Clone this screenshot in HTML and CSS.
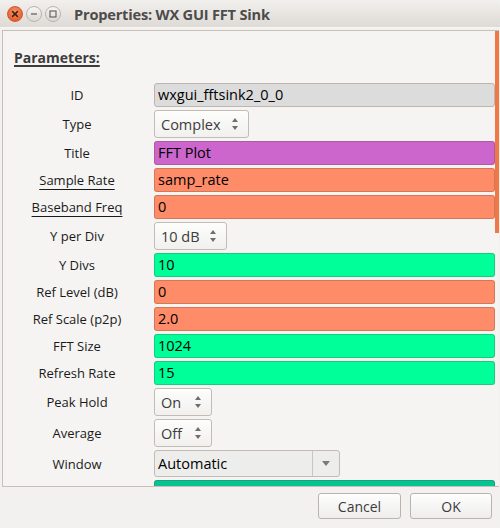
FILE: index.html
```html
<!DOCTYPE html>
<html>
<head>
<meta charset="utf-8">
<link rel="stylesheet" href="styles.css">
</head>
<body>
<div class="window">
  <div class="titlebar">
    <span class="wbtn close"><svg width="16" height="16" viewBox="0 0 16 16"><path d="M5.6 5.6 L10.4 10.4 M10.4 5.6 L5.6 10.4" stroke="#3b2418" stroke-width="1.5" stroke-linecap="round"/></svg></span>
    <span class="wbtn"><svg width="16" height="16" viewBox="0 0 16 16"><path d="M5 8 H11" stroke="#5b5b5b" stroke-width="1.2"/></svg></span>
    <span class="wbtn"><svg width="16" height="16" viewBox="0 0 16 16"><rect x="5" y="5" width="6" height="6" fill="none" stroke="#5b5b5b" stroke-width="1.1"/></svg></span>
    <span class="title">Properties: WX GUI FFT Sink</span>
  </div>
  <div class="body">
    <div class="panel">
      <div class="heading">Parameters:</div>
      <div class="params">
        <div class="label">ID</div>
        <div class="entry id">wxgui_fftsink2_0_0</div>

        <div class="label">Type</div>
        <div class="combo w95"><span>Complex</span><span class="spin"></span></div>

        <div class="label">Title</div>
        <div class="entry string">FFT Plot</div>

        <div class="label"><span class="ul">Sample Rate</span></div>
        <div class="entry real">samp_rate</div>

        <div class="label"><span class="ul">Baseband Freq</span></div>
        <div class="entry real">0</div>

        <div class="label">Y per Div</div>
        <div class="combo w73"><span>10 dB</span><span class="spin"></span></div>

        <div class="label">Y Divs</div>
        <div class="entry int">10</div>

        <div class="label">Ref Level (dB)</div>
        <div class="entry real">0</div>

        <div class="label">Ref Scale (p2p)</div>
        <div class="entry real">2.0</div>

        <div class="label">FFT Size</div>
        <div class="entry int">1024</div>

        <div class="label">Refresh Rate</div>
        <div class="entry int">15</div>

        <div class="label">Peak Hold</div>
        <div class="combo w58"><span>On</span><span class="spin"></span></div>

        <div class="label">Average</div>
        <div class="combo w58"><span>Off</span><span class="spin"></span></div>

        <div class="label">Window</div>
        <div class="dropdown"><span class="dd-text">Automatic</span><span class="dd-btn"><span class="tri"></span></span></div>

        <div class="label"></div>
        <div class="entry int2"></div>
      </div>
      <div class="scrollthumb"></div>
    </div>
    <div class="buttons">
      <button class="btn">Cancel</button>
      <button class="btn">OK</button>
    </div>
  </div>
</div>
</body>
</html>
```

FILE: styles.css
```css
html, body {
  margin: 0;
  padding: 0;
  background: #f2f1f0;
  font-family: "Open Sans", "DejaVu Sans", sans-serif;
}

.window {
  width: 500px;
  height: 528px;
  background: #f2f1f0;
  overflow: hidden;
}

.titlebar {
  height: 28px;
  box-sizing: border-box;
  display: flex;
  align-items: center;
  padding-left: 7px;
  background: linear-gradient(#f2f0ed, #dedad5);
  border-radius: 5px 5px 0 0;
  border-bottom: 1px solid #f7f6f4;
}

.wbtn {
  width: 16px;
  height: 16px;
  box-sizing: border-box;
  border-radius: 50%;
  border: 1px solid #b9b3ac;
  background: linear-gradient(#f7f6f4, #dcd8d3);
  margin-right: 3px;
  display: flex;
  align-items: center;
  justify-content: center;
}

.wbtn svg {
  flex: none;
}

.wbtn.close {
  border-color: #c95a33;
  background: radial-gradient(circle at 50% 35%, #f9936a, #e8602f 70%);
}

.title {
  margin-left: 10px;
  font-weight: bold;
  font-size: 14.6px;
  color: #4c4c4c;
  letter-spacing: -0.2px;
}

.body {
  padding-top: 2px;
}

.panel {
  position: relative;
  margin-left: 2px;
  width: 497px;
  height: 457px;
  box-sizing: border-box;
  border: 1px solid #c8c0b7;
  border-right: none;
  background: #f5f4f2;
  overflow: hidden;
}

.heading {
  margin: 18px 0 0 11px;
  font-weight: bold;
  font-size: 14px;
  line-height: 17px;
  color: #3c3c3c;
  text-decoration: underline;
  text-decoration-thickness: 2px;
  text-underline-offset: 2px;
}

.params {
  margin-top: 17px;
  display: grid;
  grid-template-columns: 148px 341px;
  column-gap: 3px;
  row-gap: 3px;
}

.label {
  align-self: center;
  text-align: center;
  font-size: 13px;
  color: #1a1a1a;
}

.ul {
  text-decoration: underline;
  text-underline-offset: 4px;
}

.entry {
  height: 24px;
  box-sizing: border-box;
  border: 1px solid rgba(90, 70, 50, 0.28);
  border-radius: 3px;
  padding-left: 3px;
  font-size: 14.5px;
  line-height: 22px;
  color: #000;
  white-space: nowrap;
}

.entry.id { background: #dcdcdc; border-color: #bdb6ae; }
.entry.string { background: #cc66cc; }
.entry.real { background: #ff8c69; }
.entry.int { background: #00ff99; }
.entry.int2 { background: #05c493; }

.combo, .dropdown {
  height: 28px;
  box-sizing: border-box;
  border: 1px solid #c3bcb4;
  border-radius: 3px;
  background: linear-gradient(#fdfdfc, #f1f0ee);
  display: flex;
  align-items: center;
  font-size: 14.5px;
  color: #3c3c3c;
}

.combo {
  justify-content: space-between;
  padding: 0 9px 0 6px;
}

.w95 { width: 95px; }
.w73 { width: 73px; }
.w58 { width: 58px; }

.spin {
  width: 7px;
  height: 12px;
  position: relative;
}

.spin::before, .spin::after {
  content: "";
  position: absolute;
  left: 0;
  border-left: 3.5px solid transparent;
  border-right: 3.5px solid transparent;
}

.spin::before {
  top: 0;
  border-bottom: 4px solid #6e6e6e;
}

.spin::after {
  bottom: 0;
  border-top: 4px solid #6e6e6e;
}

.dropdown {
  width: 186px;
  height: 27px;
  background: #ededec;
  color: #000;
}

.dd-text {
  flex: 1;
  padding-left: 3px;
  height: 100%;
  line-height: 25px;
  border-right: 1px solid #cbc5be;
}

.dd-btn {
  width: 26px;
  display: flex;
  align-items: center;
  justify-content: center;
}

.tri {
  width: 0;
  height: 0;
  border-left: 4.5px solid transparent;
  border-right: 4.5px solid transparent;
  border-top: 5px solid #7a7a7a;
}

.scrollthumb {
  position: absolute;
  top: 0;
  right: 0;
  width: 4px;
  height: 202px;
  background: #f07746;
}

.buttons {
  display: flex;
  justify-content: flex-end;
  gap: 9px;
  padding: 6px 8px 0 0;
}

.btn {
  height: 26px;
  box-sizing: border-box;
  border: 1px solid #bbb4ac;
  border-radius: 3px;
  background: linear-gradient(#fefefe, #eeedec);
  font-family: "Open Sans", "DejaVu Sans", sans-serif;
  font-size: 14px;
  color: #3c3c3c;
  padding: 0;
  width: 83px;
}

.btn:last-child {
  width: 82px;
}
```
